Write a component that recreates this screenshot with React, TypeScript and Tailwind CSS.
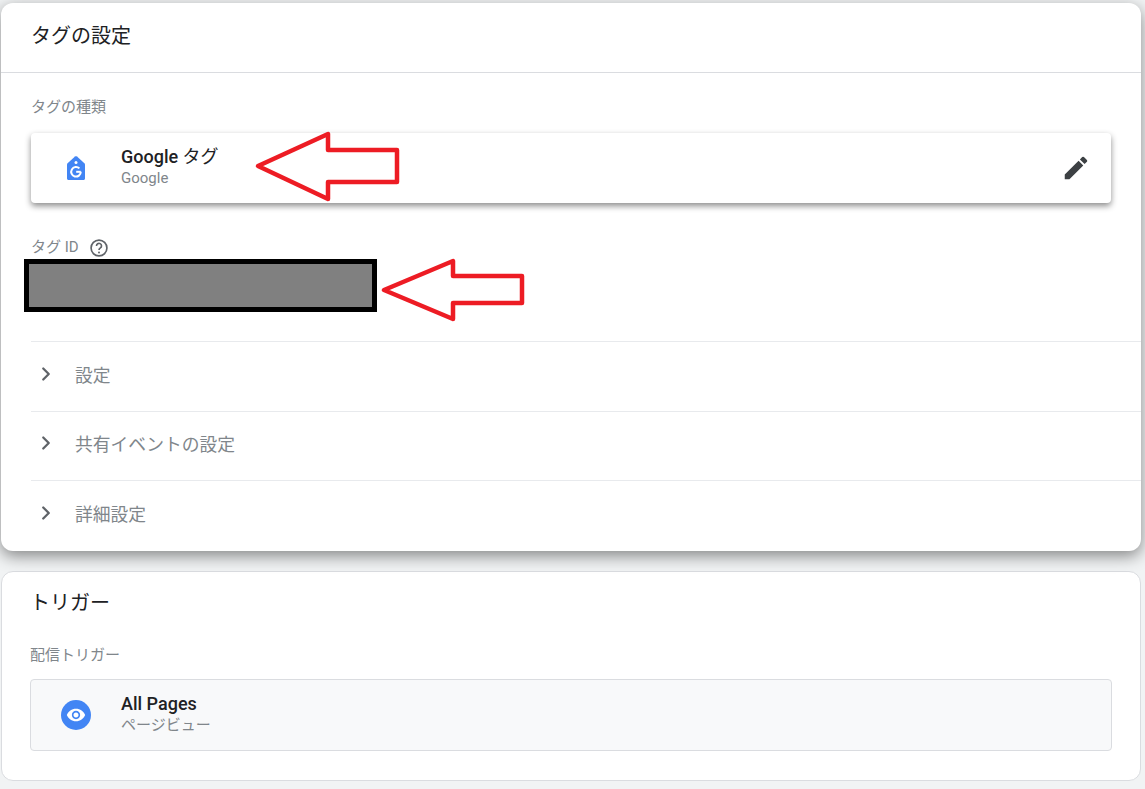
import { ChevronRight } from 'lucide-react';

const font = "font-['Roboto','Noto_Sans_CJK_JP',sans-serif]";

const sections = ['設定', '共有イベントの設定', '詳細設定'];

const Arrow = ({ className, points, width, height }: { className: string; points: string; width: number; height: number }) => (
  <svg className={className} width={width} height={height} viewBox={`0 0 ${width} ${height}`} fill="none">
    <polygon points={points} stroke="#ed1c24" strokeWidth="4.5" fill="#fff" strokeLinejoin="round" />
  </svg>
);

const App = () => {
  return (
    <div className={`relative h-[789px] w-[1145px] overflow-hidden bg-[#f1f3f4] pl-px pr-1 pt-[3px] ${font}`}>
      {/* Tag settings card */}
      <div className="relative h-[548px] rounded-xl bg-white shadow-[0_5px_16px_rgba(0,0,0,0.45)]">
        <div className="flex h-[70px] items-center border-b border-[#dadce0] pb-1 pl-[30px] text-[20px] text-[#202124]">
          タグの設定
        </div>
        <div className="pl-[30px]">
          <div className="mt-[24px] text-[15px] leading-5 text-[#80868b]">タグの種類</div>
          <div className="mt-[16px] mr-[30px] flex h-[70px] items-center rounded bg-white pl-[32px] pr-[20px] shadow-[0_3px_6px_rgba(0,0,0,0.45)]">
            <svg width="26" height="26" viewBox="0 0 26 26" className="shrink-0">
              <path d="M4 23.500V9.600c0-.6.2-1 .6-1.400L12 1.600c.6-.4 1.400-.4 2 0l7.400 6.600c.4.4.6.8.6 1.400v13.900c0 .9-.7 1.500-1.500 1.500h-15C4.700 25 4 24.400 4 23.500z" fill="#4285f4" />
              <circle cx="13" cy="7.500" r="1.500" fill="#fff" />
              <path d="M17.800 16.800A4.800 4.800 0 1 1 16.400 13.400" fill="none" stroke="#fff" strokeWidth="2" />
              <path d="M13.200 16.800h4.600" stroke="#fff" strokeWidth="2" />
            </svg>
            <div className="ml-[32px] flex-1 pb-0.5">
              <div className="text-[18px] leading-[22px] font-medium text-[#202124]">
                Google <span className="font-normal">タグ</span>
              </div>
              <div className="text-[15px] leading-5 text-[#80868b]">Google</div>
            </div>
            <svg width="30" height="30" viewBox="0 0 24 24" fill="#3c4043">
              <path d="M3 17.250V21h3.750L17.810 9.940l-3.750-3.750L3 17.250zM20.710 7.040a1 1 0 0 0 0-1.410l-2.340-2.340a1 1 0 0 0-1.410 0l-1.830 1.830 3.750 3.750 1.830-1.830z" />
            </svg>
          </div>
          <div className="mt-[32px] flex items-center text-[15px] leading-5 text-[#80868b]">
            タグ ID
            <svg width="20" height="20" viewBox="0 0 24 24" fill="none" className="ml-[10px] mt-[3px]">
              <circle cx="12" cy="12" r="9.500" stroke="#5f6368" strokeWidth="2" />
              <path d="M9 9.500a3 3 0 1 1 4.700 2.400c-1 .7-1.700 1.200-1.700 2.600" stroke="#5f6368" strokeWidth="2" fill="none" />
              <circle cx="12" cy="17.500" r="1.200" fill="#5f6368" />
            </svg>
          </div>
          <div className="-ml-[7px] mt-[1px] h-[53px] w-[353px] border-[5px] border-black bg-[#808080]" />
          <div className="mt-[29px]">
            {sections.map((label) => (
              <div key={label} className="flex h-[69.500px] items-center border-t border-[#e8eaed] pl-[4px] text-[17.800px] text-[#80868b]">
                <ChevronRight size={22} strokeWidth={2.500} className="mb-[5px] text-[#5f6368]" />
                <span className="ml-[18px]">{label}</span>
              </div>
            ))}
          </div>
        </div>
      </div>

      {/* Trigger card */}
      <div className="mt-[20px] h-[210px] rounded-xl border border-[#dadce0] bg-white px-[28px] pt-[17px]">
        <div className="text-[20px] leading-7 text-[#202124]">トリガー</div>
        <div className="mt-[28px] text-[15px] leading-5 text-[#80868b]">配信トリガー</div>
        <div className="mt-[14px] flex h-[72px] w-[1082px] items-center rounded border border-[#dadce0] bg-[#f8f9fa] pl-[30px]">
          <div className="flex h-[30px] w-[30px] items-center justify-center rounded-full bg-[#4285f4]">
            <svg width="20" height="20" viewBox="0 0 24 24" fill="#fff">
              <path d="M12 4.500C7 4.500 2.730 7.610 1 12c1.730 4.390 6 7.500 11 7.500s9.270-3.110 11-7.500c-1.730-4.390-6-7.500-11-7.500zM12 17c-2.760 0-5-2.240-5-5s2.240-5 5-5 5 2.240 5 5-2.240 5-5 5zm0-8c-1.660 0-3 1.340-3 3s1.340 3 3 3 3-1.340 3-3-1.340-3-3-3z" />
            </svg>
          </div>
          <div className="ml-[30px] pb-0.5">
            <div className="text-[18px] leading-[22px] font-medium text-[#202124]">All Pages</div>
            <div className="text-[15px] leading-5 text-[#80868b]">ページビュー</div>
          </div>
        </div>
      </div>

      {/* Annotation arrows */}
      <Arrow className="absolute left-[254px] top-[130px]" width={146} height={74} points="4,36 74,4 74,20 143,20 143,52 74,52 74,69" />
      <Arrow className="absolute left-[380px] top-[257px]" width={146} height={66} points="4,33 73,4 73,19 142,19 142,46 73,46 73,62" />
    </div>
  );
};

export default App;
